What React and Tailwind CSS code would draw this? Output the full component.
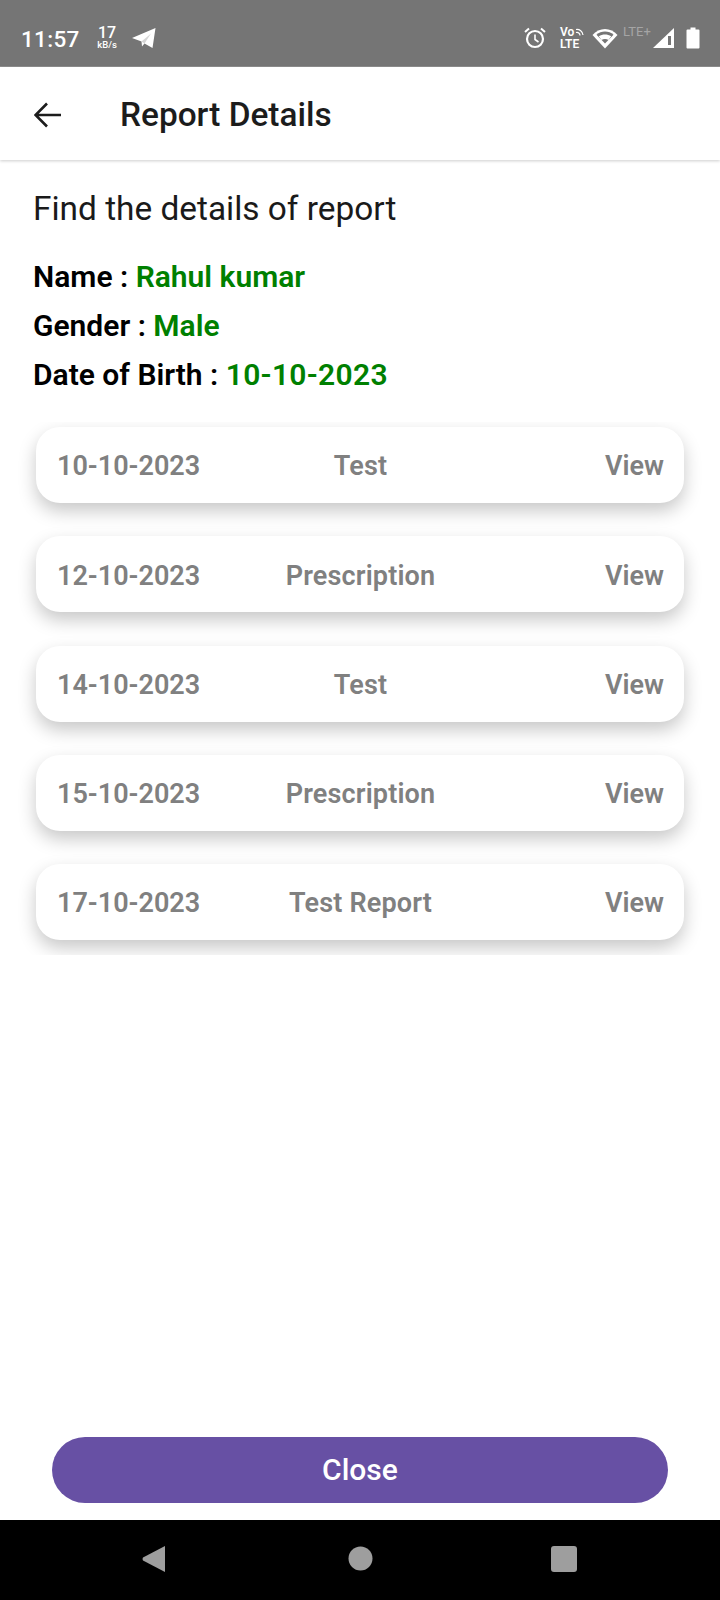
const rows = [
  ["10-10-2023", "Test"],
  ["12-10-2023", "Prescription"],
  ["14-10-2023", "Test"],
  ["15-10-2023", "Prescription"],
  ["17-10-2023", "Test Report"],
];

function StatusIcons() {
  return (
    <div className="flex items-center">
      <svg width="24" height="24" viewBox="0 0 24 24" fill="none" stroke="#fff" strokeWidth="2.2">
        <circle cx="12" cy="13" r="8" />
        <path d="M12 8.5V13.5L15.5 16" strokeWidth="1.6" />
        <path d="M2 6L6 2.5M22 6L18 2.5" strokeWidth="2" />
      </svg>
      <div className="ml-[13px] w-[24px] flex flex-col items-start text-[12px] leading-[12px] font-semibold text-white relative">
        <span>Vo</span>
        <span>LTE</span>
        <svg width="10" height="10" viewBox="0 0 10 10" fill="none" stroke="#fff" strokeWidth="1.2" className="absolute left-[15px] top-[1px]">
          <path d="M1 2.5A6 6 0 0 1 8 8M1 5.5A3 3 0 0 1 5 8.5" />
        </svg>
      </div>
      <svg width="26" height="22" viewBox="0 0 26 22" className="ml-[8px]">
        <path d="M13 21.5L0.5 8C7 0 19 0 25.5 8Z" fill="#fff" />
        <path d="M13 16.5L4.5 7.8C9 3.5 17 3.5 21.5 7.8Z" fill="#757575" />
        <path d="M9.5 12.9L6.8 9.3C10.5 7 15.5 7 19.2 9.3L16.5 12.9C14.5 11.8 11.5 11.8 9.5 12.9Z" fill="#fff" />
      </svg>
      <div className="ml-[5px] w-[32px] self-start mt-[-1px] text-[13px] leading-[14px] text-[#a5a5a5]">LTE+</div>
      <svg width="24" height="22" viewBox="0 0 24 22" className="ml-[-3px]">
        <path d="M1 21L22 1V21Z" fill="#fff" />
        <path d="M16 9H19V18H16Z" fill="#757575" />
      </svg>
      <svg width="14" height="22" viewBox="0 0 14 22" className="ml-[10px]">
        <path d="M4.5 0.5H9.5V2.5H12.5A1 1 0 0 1 13.5 3.5V20.5A1 1 0 0 1 12.5 21.5H1.5A1 1 0 0 1 0.5 20.5V3.5A1 1 0 0 1 1.5 2.5H4.5Z" fill="#fff" />
      </svg>
    </div>
  );
}

export default function App() {
  return (
    <div className="w-[720px] h-[1600px] flex flex-col bg-white font-['Roboto',sans-serif] overflow-hidden">
      <div className="h-[67px] shrink-0 bg-[#757575] border-b border-[#8f8f8f] flex items-center justify-between pl-[21px] pr-[20px] pt-[10px] text-white">
        <div className="flex items-center">
          <span className="text-[22.5px] leading-[28px] w-[57px] tracking-[0.3px] font-medium mt-[1px]">11:57</span>
          <div className="ml-[17px] w-[24px] flex flex-col items-center">
            <span className="text-[16px] leading-[14px] font-medium">17</span>
            <span className="text-[9.5px] leading-[10px] font-medium">kB/s</span>
          </div>
          <svg width="26" height="22" viewBox="0 0 26 22" className="ml-[12px]">
            <path d="M1 11L24.5 1L21.5 21L13.5 16.5L11 19.5L10.5 14.5Z" fill="#fff" />
            <path d="M10.5 14.5L20 6.5L13.5 16.5Z" fill="#757575" opacity="0.3" />
          </svg>
        </div>
        <StatusIcons />
      </div>

      <header className="h-[93px] shrink-0 flex items-center shadow-[0_1px_3px_rgba(0,0,0,0.2)] relative pl-[34px] pt-[2px]">
        <svg width="27" height="26" viewBox="0 0 27 26" fill="none" stroke="#1c1c1c" strokeWidth="2.6">
          <path d="M1.5 13H27M13 1.5L1.5 13L13 24.5" />
        </svg>
        <h1 className="ml-[59px] mt-[1px] text-[33.4px] leading-[40px] font-medium text-[#1c1c1c]">Report Details</h1>
      </header>

      <main className="flex-1 min-h-0 flex flex-col">
        <div className="pl-[33px] pt-[28px]">
          <p className="text-[33.4px] leading-[42px] text-[#1a1a1a]">Find the details of report</p>
          <div className="mt-[26px] flex flex-col gap-[7px] text-[30px] leading-[42px] font-semibold text-black">
            <p>Name : <span className="text-[#008000]">Rahul kumar</span></p>
            <p>Gender : <span className="text-[#008000]">Male</span></p>
            <p>Date of Birth : <span className="text-[#008000] tracking-[0.3px]">10-10-2023</span></p>
          </div>
        </div>
        <div className="mt-[26px] h-[533px] overflow-hidden flex flex-col gap-[33.25px] px-[36px] pt-[5px]">
          {rows.map(([date, kind]) => (
            <div key={date} className="h-[76px] shrink-0 rounded-[24px] bg-white shadow-[0_8px_18px_rgba(0,0,0,0.22)] grid grid-cols-[1fr_auto_1fr] items-center pl-[21px] pr-[20px] pt-[3px] text-[27px] font-semibold text-[#808080]">
              <span>{date}</span>
              <span className="text-center tracking-[0.15px]">{kind}</span>
              <span className="text-right">View</span>
            </div>
          ))}
        </div>
        <div className="mt-auto mb-[17px] mx-[52px] h-[66px] pb-[2px] rounded-full bg-[#6750a4] flex items-center justify-center text-white text-[30px] font-medium">Close</div>
      </main>

      <nav className="h-[80px] shrink-0 bg-black flex items-center justify-center gap-[178px] pb-[3px] pr-[3px]">
        <svg width="25" height="28" viewBox="0 0 25 28" className="mr-[4px]"><path d="M24 1V27L2 15.5Q1 14 2 12.5Z" fill="#9e9e9e" /></svg>
        <svg width="25" height="25" viewBox="0 0 25 25"><circle cx="12.5" cy="12.5" r="12" fill="#9e9e9e" /></svg>
        <svg width="26" height="26" viewBox="0 0 26 26"><rect width="26" height="26" rx="3" fill="#9e9e9e" /></svg>
      </nav>
    </div>
  );
}
